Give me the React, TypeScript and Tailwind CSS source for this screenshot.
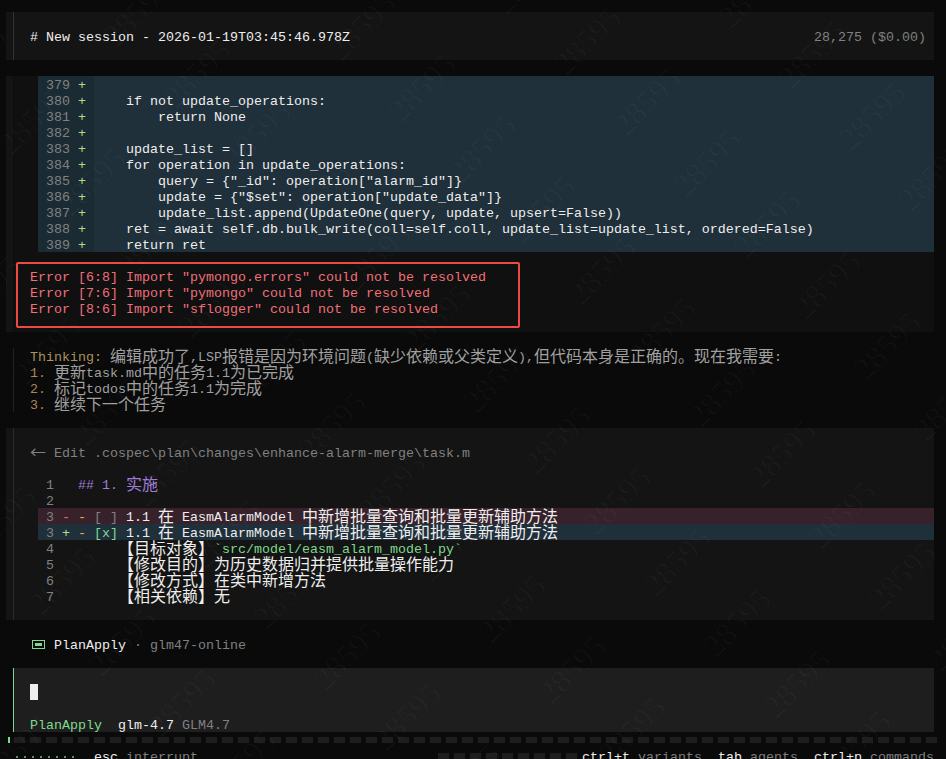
import type { ReactNode } from 'react'

const MONO = 'font-["Liberation_Mono","Noto_Sans_CJK_SC",monospace]'

// latin cells are 8px, cjk cells 16px, same as the terminal grid
function T({ s }: { s: string }) {
  const parts = s.split(/([\u2190\u2E80-\u9FFF\uFF00-\uFFEF\u3000-\u303F]+)/)
  return (
    <>
      {parts.map((p, i) =>
        i % 2 === 1 ? (
          <span key={i} className='align-[-1px] font-["Noto_Sans_CJK_SC",sans-serif] text-[16px] leading-[0]'>
            {p}
          </span>
        ) : (
          p
        ),
      )}
    </>
  )
}

function Row({ children, className = '' }: { children?: ReactNode; className?: string }) {
  return <div className={`h-4 whitespace-pre leading-5 ${className}`}>{children}</div>
}

const diffLines: [string, string][] = [
  ['379', ''],
  ['380', '    if not update_operations:'],
  ['381', '        return None'],
  ['382', ''],
  ['383', '    update_list = []'],
  ['384', '    for operation in update_operations:'],
  ['385', '        query = {"_id": operation["alarm_id"]}'],
  ['386', '        update = {"$set": operation["update_data"]}'],
  ['387', '        update_list.append(UpdateOne(query, update, upsert=False))'],
  ['388', '    ret = await self.db.bulk_write(coll=self.coll, update_list=update_list, ordered=False)'],
  ['389', '    return ret'],
]

const errors = [
  'Error [6:8] Import "pymongo.errors" could not be resolved',
  'Error [7:6] Import "pymongo" could not be resolved',
  'Error [8:6] Import "sflogger" could not be resolved',
]

const plan = ['更新task.md中的任务1.1为已完成', '标记todos中的任务1.1为完成', '继续下一个任务']

const watermarks: { x: number; y: number }[] = []
for (let i = -14; i < 14; i++) {
  for (let j = -8; j < 10; j++) {
    const x = 570 + i * 60 + j * 165
    const y = 80 + i * 61 - j * 47
    if (x > -100 && x < 960 && y > -20 && y < 860) watermarks.push({ x, y })
  }
}

export default function App() {
  return (
    <div className={`relative h-[759px] w-[946px] overflow-hidden bg-[#0a0a0a] text-[13.334px] text-[#eeeeee] ${MONO}`}>
      <div className="flex flex-col pl-1.5 pr-3 pt-3">
        {/* session header */}
        <div className="bg-[#141414] pl-[7px]">
          <div className="flex justify-between border-l border-[#333333] py-4 pl-4 pr-2">
            <Row># New session - 2026-01-19T03:45:46.978Z</Row>
            <Row className="text-[#808080]">28,275 ($0.00)</Row>
          </div>
        </div>

        {/* edit output */}
        <div className="mt-4 bg-[#141414] pl-[7px]">
          <div className="border-l border-[#0d0d0d] bg-[#101010] pb-4 pl-6">
            <div className="mb-4">
              {diffLines.map(([n, code]) => (
                <div key={n} className="flex bg-[#20303b]">
                  <Row className="w-14 shrink-0 bg-[#1b2b34] pl-2 text-[#808080]">
                    {n} <span className="text-[#b8db87]">+</span>
                  </Row>
                  <Row>{code}</Row>
                </div>
              ))}
            </div>
            {errors.map((e) => (
              <Row key={e} className="-ml-2 text-[#ee6f79]">
                {e}
              </Row>
            ))}
          </div>
        </div>

        {/* thinking */}
        <div className="mt-4 pl-[7px]">
          <div className="border-l border-[#222222] pl-4 text-[#a0a0a0]">
            <Row>
              <span className="text-[#a8925f]">Thinking:</span>{' '}
              <T s="编辑成功了,LSP报错是因为环境问题(缺少依赖或父类定义),但代码本身是正确的。现在我需要:" />
            </Row>
            {plan.map((p, i) => (
              <Row key={p}>
                <span className="text-[#ad8458]">{i + 1}. </span>
                <T s={p} />
              </Row>
            ))}
          </div>
        </div>

        {/* edit block */}
        <div className="mt-4 bg-[#141414] pl-[7px]">
          <div className="border-l border-[#2a2a2a] py-4">
            <Row className="pl-4 text-[#808080]">
              <T s="← Edit .cospec\plan\changes\enhance-alarm-merge\task.m" />
            </Row>
            <div className="mt-4 pl-6">
              <Row className="pl-2 text-[#808080]">
                1{'   '}
                <span className="text-[#9d7cd8]">
                  ## 1. <T s="实施" />
                </span>
              </Row>
              <Row className="pl-2 text-[#808080]">2</Row>
              <Row className="bg-[#37222c] pl-2 text-[#808080]">
                3 <span className="text-[#e26a75]">-</span> <span className="text-[#f5a742]">-</span> [ ]{' '}
                <span className="text-[#eeeeee]">
                  <T s="1.1 在 EasmAlarmModel 中新增批量查询和批量更新辅助方法" />
                </span>
              </Row>
              <Row className="bg-[#20303b] pl-2 text-[#808080]">
                3 <span className="text-[#b8db87]">+</span> <span className="text-[#f5a742]">-</span>{' '}
                <span className="text-[#7fd88f]">[x]</span>{' '}
                <span className="text-[#eeeeee]">
                  <T s="1.1 在 EasmAlarmModel 中新增批量查询和批量更新辅助方法" />
                </span>
              </Row>
              <Row className="pl-2 text-[#808080]">
                4{'        '}
                <span className="text-[#eeeeee]">
                  <T s="【目标对象】" />
                </span>
                <span className="text-[#7fd88f]">`src/model/easm_alarm_model.py`</span>
              </Row>
              <Row className="pl-2 text-[#808080]">
                5{'        '}
                <span className="text-[#eeeeee]">
                  <T s="【修改目的】为历史数据归并提供批量操作能力" />
                </span>
              </Row>
              <Row className="pl-2 text-[#808080]">
                6{'        '}
                <span className="text-[#eeeeee]">
                  <T s="【修改方式】在类中新增方法" />
                </span>
              </Row>
              <Row className="pl-2 text-[#808080]">
                7{'        '}
                <span className="text-[#eeeeee]">
                  <T s="【相关依赖】无" />
                </span>
              </Row>
            </div>
          </div>
        </div>

        {/* agent line */}
        <div className="mt-4 flex h-4 items-center pl-6">
          <span className="w-6 shrink-0 pl-0.5">
            <svg width="13" height="9" viewBox="0 0 13 9" className="block">
              <rect x="0.5" y="0.5" width="12" height="8" fill="none" stroke="#7fd88f" />
              <rect x="3" y="3" width="7" height="3" fill="#7fd88f" />
            </svg>
          </span>
          <Row>
            PlanApply <span className="text-[#808080]">· glm47-online</span>
          </Row>
        </div>

        {/* prompt */}
        <div className="ml-[7px] mt-4 border-l border-[#7fd88f] bg-[#1e1e1e] pl-4 pt-4">
          <div className="h-4 w-2 bg-[#eeeeee]" />
          <Row className="mt-4">
            <span className="text-[#7fd88f]">PlanApply</span>
            {'  '}glm-4.7 <span className="text-[#808080]">GLM4.7</span>
          </Row>
        </div>
      </div>

      {/* progress strip */}
      <div className="ml-2 mt-[5px] flex h-[6px]">
        <div className="mr-1 w-[2px] bg-[#7fd88f]" />
        <div className="flex gap-[5px]">
          {Array.from({ length: 58 }).map((_, i) => (
            <div key={i} className="w-[11px] bg-[#1e1e1e]" />
          ))}
        </div>
      </div>

      {/* footer, cut off by the window */}
      <div className="mt-[5px] flex h-4 pr-3">
        <div className="ml-4 flex h-[10px] w-[78px] items-end gap-[6px]">
          {Array.from({ length: 8 }).map((_, i) => (
            <div key={i} className="size-[2px] bg-[#4f9a5c]" />
          ))}
        </div>
        <Row>
          esc <span className="text-[#808080]">interrupt</span>
        </Row>
        <div className="ml-[240px] mt-[5px] flex h-2 gap-[5px]">
          {Array.from({ length: 9 }).map((_, i) => (
            <div key={i} className="w-[11px] bg-[#1e1e1e]" />
          ))}
        </div>
        <div className="ml-auto flex gap-4">
          <Row>
            ctrl+t <span className="text-[#808080]">variants</span>
          </Row>
          <Row>
            tab <span className="text-[#808080]">agents</span>
          </Row>
          <Row>
            ctrl+p <span className="text-[#808080]">commands</span>
          </Row>
        </div>
      </div>

      {/* red annotation box */}
      <div className="pointer-events-none absolute left-4 top-[262px] h-[66px] w-[504px] rounded-[2px] border-2 border-[#ef4a42]" />

      {/* tiled watermark */}
      <div className="pointer-events-none absolute inset-0 overflow-hidden">
        {watermarks.map((w) => (
          <div
            key={`${w.x}-${w.y}`}
            className='absolute origin-bottom-left -rotate-45 font-["Liberation_Serif",serif] text-[32px] leading-none text-white/[0.028]'
            style={{ left: w.x, top: w.y - 32 }}
          >
            28595
          </div>
        ))}
      </div>
    </div>
  )
}
